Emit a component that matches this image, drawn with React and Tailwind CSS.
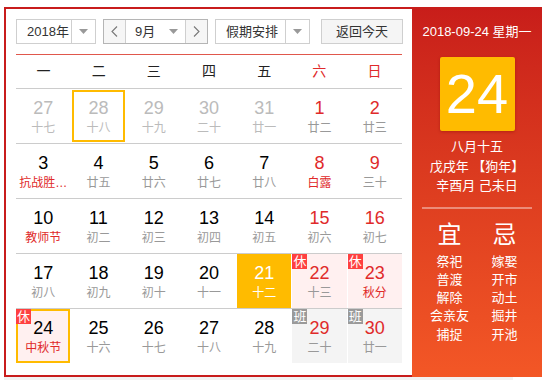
import React from "react";

const RED = "text-[#e02a2a]";

const rows = [
  [
    { n: 27, l: "十七", o: true },
    { n: 28, l: "十八", o: true, sel: true },
    { n: 29, l: "十九", o: true },
    { n: 30, l: "二十", o: true },
    { n: 31, l: "廿一", o: true },
    { n: 1, l: "廿二", w: true },
    { n: 2, l: "廿三", w: true },
  ],
  [
    { n: 3, l: "抗战胜…", f: true },
    { n: 4, l: "廿五" },
    { n: 5, l: "廿六" },
    { n: 6, l: "廿七" },
    { n: 7, l: "廿八" },
    { n: 8, l: "白露", w: true, f: true },
    { n: 9, l: "三十", w: true },
  ],
  [
    { n: 10, l: "教师节", f: true },
    { n: 11, l: "初二" },
    { n: 12, l: "初三" },
    { n: 13, l: "初四" },
    { n: 14, l: "初五" },
    { n: 15, l: "初六", w: true },
    { n: 16, l: "初七", w: true },
  ],
  [
    { n: 17, l: "初八" },
    { n: 18, l: "初九" },
    { n: 19, l: "初十" },
    { n: 20, l: "十一" },
    { n: 21, l: "十二", today: true },
    { n: 22, l: "十三", w: true, rest: true },
    { n: 23, l: "秋分", w: true, rest: true, f: true },
  ],
  [
    { n: 24, l: "中秋节", rest: true, f: true, cur: true },
    { n: 25, l: "十六" },
    { n: 26, l: "十七" },
    { n: 27, l: "十八" },
    { n: 28, l: "十九" },
    { n: 29, l: "二十", w: true, work: true },
    { n: 30, l: "廿一", w: true, work: true },
  ],
];

function Arrow() {
  return (
    <svg width="9" height="5" viewBox="0 0 9 5">
      <path d="M0 0H9L4.5 5Z" fill="#999" />
    </svg>
  );
}

function Chevron({ dir }) {
  return (
    <svg width="7" height="11" viewBox="0 0 7 11">
      <path
        d={dir === "l" ? "M6 0.5L1 5.5L6 10.5" : "M1 0.5L6 5.5L1 10.5"}
        fill="none"
        stroke="#777"
        strokeWidth="1.1"
      />
    </svg>
  );
}

function Cell({ d }) {
  let bg = "bg-white";
  if (d.today) bg = "bg-[#ffbb00]";
  else if (d.rest) bg = "bg-[#fff0f0]";
  else if (d.work) bg = "bg-[#f4f4f4]";

  let ring = "";
  if (d.sel) ring = "shadow-[inset_0_0_0_1px_#fff,inset_0_0_0_3px_#ffbb00]";
  if (d.cur) ring = "shadow-[inset_0_0_0_2px_#ffbb00]";

  let numC = "text-black";
  if (d.o) numC = "text-[#bbbbbb]";
  else if (d.today) numC = "text-white";
  else if (d.w) numC = RED;

  let lunC = "text-[#999]";
  if (d.o) lunC = "text-[#bbbbbb]";
  else if (d.today) lunC = "text-white";
  else if (d.f) lunC = RED;

  return (
    <div className={`relative flex flex-col items-center h-[54px] pt-[9px] ${bg} ${ring}`}>
      {d.rest && (
        <span className="absolute left-0 top-0 w-[15px] h-[15px] bg-[#ff4040] text-white text-[13px] leading-[15px] text-center">
          休
        </span>
      )}
      {d.work && (
        <span className="absolute left-0 top-0 w-[15px] h-[15px] bg-[#9a9a9a] text-white text-[13px] leading-[15px] text-center">
          班
        </span>
      )}
      <div className={`text-[18px] leading-[21px] ${numC}`}>{d.n}</div>
      <div className={`text-[12px] leading-[16px] mt-[1px] ${lunC}`}>{d.l}</div>
    </div>
  );
}

export default function App() {
  const week = ["一", "二", "三", "四", "五", "六", "日"];
  const yi = ["祭祀", "普渡", "解除", "会亲友", "捕捉"];
  const ji = ["嫁娶", "开市", "动土", "掘井", "开池"];
  return (
    <div className="w-[553px] h-[380px] bg-white pt-[7px] pl-[4px] font-['Liberation_Sans','Noto_Sans_CJK_SC',sans-serif]">
      <div className="flex w-[538px] h-[370px]">
        {/* left calendar */}
        <div className="w-[408px] h-full border-2 border-r-0 border-[#c81c1c] pt-[10px] pl-[10px] pr-[10px] bg-white">
          {/* toolbar */}
          <div className="flex items-stretch h-[25px] text-[13px] text-[#333]">
            <div className="flex w-[80px] border border-[#cfcfcf]">
              <div className="flex-1 flex items-center pl-[10px]">2018年</div>
              <div className="w-[24px] flex items-center justify-center border-l border-[#cfcfcf]">
                <Arrow />
              </div>
            </div>
            <div className="flex w-[105px] ml-[7px] border border-[#b5b5b5]">
              <div className="w-[22px] flex items-center justify-center bg-[#f6f6f6] border-r border-[#cfcfcf]">
                <Chevron dir="l" />
              </div>
              <div className="flex-1 flex items-center pl-[9px]">
                <span>9月</span>
                <span className="ml-[14px] flex">
                  <Arrow />
                </span>
              </div>
              <div className="w-[22px] flex items-center justify-center bg-[#f6f6f6] border-l border-[#cfcfcf]">
                <Chevron dir="r" />
              </div>
            </div>
            <div className="flex w-[95px] ml-[7px] border border-[#cfcfcf]">
              <div className="flex-1 flex items-center pl-[10px]">假期安排</div>
              <div className="w-[24px] flex items-center justify-center border-l border-[#cfcfcf]">
                <Arrow />
              </div>
            </div>
            <div className="ml-auto w-[82px] mr-[-1px] flex items-center justify-center border border-[#cfcfcf] bg-[#f5f5f5]">
              返回今天
            </div>
          </div>
          {/* red line */}
          <div className="mt-[10px] h-px bg-[#e0574c]" />
          {/* weekday header */}
          <div className="grid grid-cols-7 h-[34px] items-center border-b border-[#cccccc] text-[14px]">
            {week.map((w, i) => (
              <div key={w} className={`text-center ${i >= 5 ? RED : "text-[#222]"}`}>
                {w}
              </div>
            ))}
          </div>
          {/* days */}
          {rows.map((r, ri) => (
            <div
              key={ri}
              className={`grid grid-cols-7 gap-x-px ${ri > 0 ? "border-t border-[#cccccc]" : ""}`}
            >
              {r.map((d, i) => (
                <Cell key={i} d={d} />
              ))}
            </div>
          ))}
        </div>
        {/* right panel */}
        <div className="w-[130px] h-full bg-gradient-to-b from-[#c81d1a] to-[#f35726] flex flex-col items-center text-white">
          <div className="mt-[15px] text-[13px] leading-[20px]">2018-09-24 星期一</div>
          <div className="mt-[15px] w-[75px] h-[74px] rounded-[2px] bg-[#ffbb00] shadow-[0_1px_3px_rgba(120,0,0,0.35)] flex items-center justify-center text-[56px] leading-none">
            24
          </div>
          <div className="mt-[6px] text-[13px] leading-[19.5px] text-center">
            <div>八月十五</div>
            <div>戊戌年 【狗年】</div>
            <div>辛酉月 己未日</div>
          </div>
          <div className="mt-[11px] w-[110px] h-[2px] bg-white/40" />
          <div className="mt-[12px] flex w-[110px]">
            <div className="w-[55px] flex flex-col items-center">
              <div className="text-[24px] leading-[28px]">宜</div>
              <div className="mt-[4px] text-[13px] leading-[18.3px] text-center">
                {yi.map((t) => (
                  <div key={t}>{t}</div>
                ))}
              </div>
            </div>
            <div className="w-[55px] flex flex-col items-center">
              <div className="text-[24px] leading-[28px]">忌</div>
              <div className="mt-[4px] text-[13px] leading-[18.3px] text-center">
                {ji.map((t) => (
                  <div key={t}>{t}</div>
                ))}
              </div>
            </div>
          </div>
        </div>
      </div>
      <div className="w-[509px] h-[3px] bg-[#f2f2f2]" />
    </div>
  );
}
